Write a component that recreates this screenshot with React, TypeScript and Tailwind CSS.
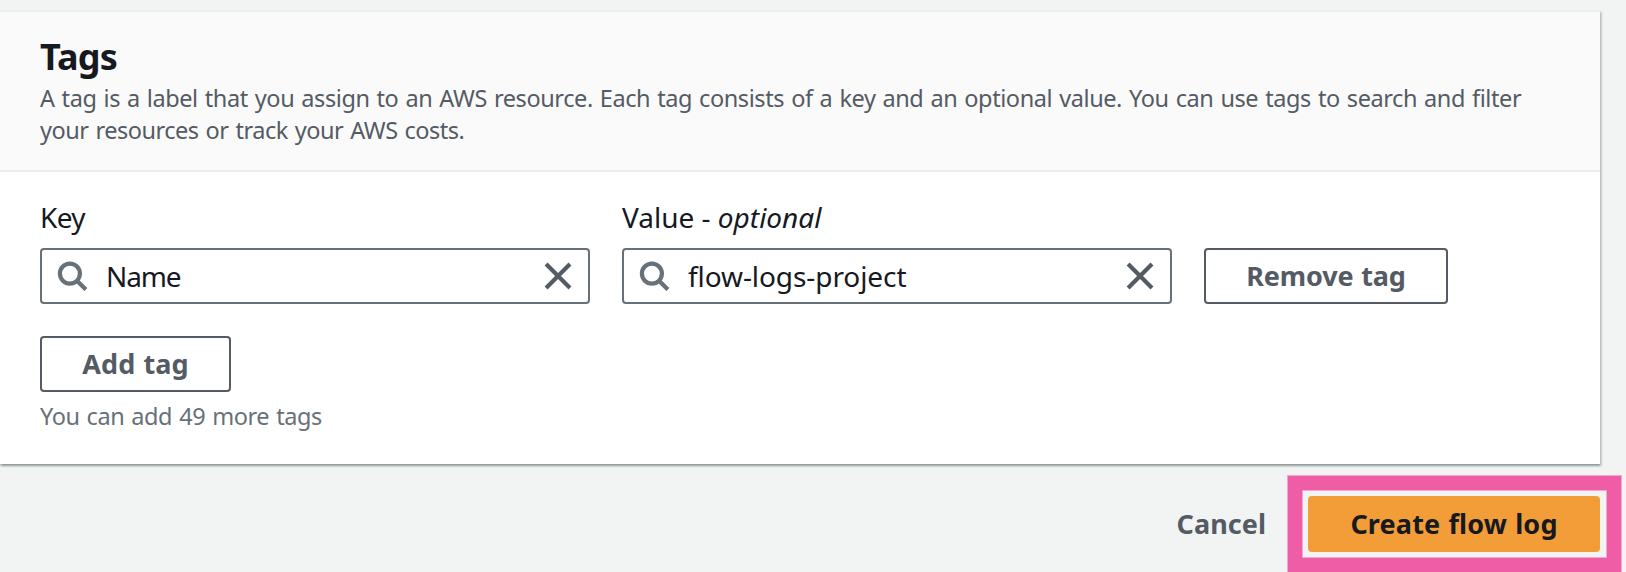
type FieldProps = { value: string; tracking: string };

function SearchIcon() {
  return (
    <svg width="32" height="32" viewBox="0 0 32 32" fill="none" stroke="#687078" strokeWidth="4.2">
      <circle cx="13.9" cy="14.6" r="10" />
      <path d="M21 21.7 29.9 30.6" />
    </svg>
  );
}

function CloseIcon() {
  return (
    <svg width="32" height="32" viewBox="0 0 32 32" fill="none" stroke="#545b64" strokeWidth="4.2">
      <path d="M4.1 4.1 28 28M28 4.1 4.1 28" />
    </svg>
  );
}

function Field({ value, tracking }: FieldProps) {
  return (
    <div className="flex h-14 w-[550px] items-center rounded border-2 border-[#687078] bg-white px-3.5 text-[28px] text-[#16191f]">
      <span className="pb-0.5">
        <SearchIcon />
      </span>
      <span className={`flex-1 pl-[18px] leading-10 ${tracking}`}>{value}</span>
      <CloseIcon />
    </div>
  );
}

export default function App() {
  return (
    <div className="h-[572px] overflow-hidden bg-[#f2f3f3] pt-2.5 font-['Noto_Sans',sans-serif] text-[#16191f]">
      <section className="w-[1600px] border-t-2 border-[#eaeded] bg-white shadow-[0_2px_2px_0_rgba(0,28,36,0.3),2px_2px_2px_0_rgba(0,28,36,0.15)]">
        <header className="h-40 border-b-2 border-[#eaeded] bg-[#fafafa] pt-[23px] pl-10">
          <h2 className="text-4xl leading-[44px] font-bold tracking-[-0.8px]">Tags</h2>
          <p className="mt-[3px] text-[23.5px] leading-8 tracking-[-0.41px] whitespace-nowrap text-[#545b64] [word-spacing:1.3px]">
            A tag is a label that you assign to an AWS resource. Each tag consists of a key and an optional value. You can use tags to search and filter
            <br />
            <span className="tracking-[-0.48px]">your resources or track your AWS costs.</span>
          </p>
        </header>
        <div className="px-10 pt-[25px] pb-8">
          <div className="flex items-end gap-8">
            <div>
              <div className="mb-[11px] text-[28px] leading-10 tracking-[-0.6px]">Key</div>
              <Field value="Name" tracking="tracking-[-1.1px]" />
            </div>
            <div>
              <div className="mb-[11px] text-[28px] leading-10">
                Value - <i>optional</i>
              </div>
              <Field value="flow-logs-project" tracking="tracking-[-0.08px]" />
            </div>
            <button className="flex h-14 w-[244px] items-center justify-center rounded border-2 border-[#545b64] text-[27px] font-bold tracking-[-0.15px] text-[#545b64] [word-spacing:1px]">
              Remove tag
            </button>
          </div>
          <button className="mt-8 flex h-14 w-[191px] items-center justify-center rounded border-2 border-[#545b64] text-[27px] font-bold tracking-[0.1px] text-[#545b64] [word-spacing:1px]">
            Add tag
          </button>
          <div className="mt-2 text-[23.5px] leading-8 tracking-[-0.42px] text-[#687078] [word-spacing:1.3px]">You can add 49 more tags</div>
        </div>
      </section>
      <footer className="mt-8 flex w-[1600px] justify-end">
        <button className="flex h-14 items-center pr-[42px] text-[27px] font-bold tracking-[0.05px] text-[#545b64]">Cancel</button>
        <div className="relative">
          <button className="flex h-14 w-[292px] items-center justify-center rounded bg-[#f29d38] text-[27px] font-bold tracking-[0.15px] [word-spacing:1px]">
            Create flow log
          </button>
          <div className="pointer-events-none absolute -top-5 -right-[21px] -bottom-5 -left-5 border-[14px] border-[#ee5da6] shadow-[0_0_0_1px_#f2a8ce,inset_0_0_0_1px_#f2a8ce]" />
        </div>
      </footer>
    </div>
  );
}
